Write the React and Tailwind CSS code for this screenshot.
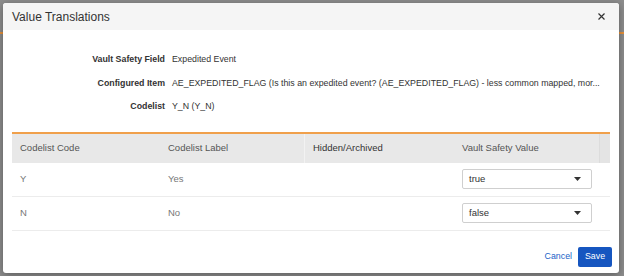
import React from 'react';

const fields = [
  { label: 'Vault Safety Field', value: 'Expedited Event' },
  {
    label: 'Configured Item',
    value:
      'AE_EXPEDITED_FLAG (Is this an expedited event? (AE_EXPEDITED_FLAG) - less common mapped, mor...',
  },
  { label: 'Codelist', value: 'Y_N (Y_N)' },
];

const rows = [
  { code: 'Y', label: 'Yes', value: 'true' },
  { code: 'N', label: 'No', value: 'false' },
];

const cols = 'grid grid-cols-[148px_145px_149px_146px_1fr]';

const Caret = () => (
  <svg width="7" height="4" viewBox="0 0 7 4" className="text-[#333]">
    <path d="M0 0 L7 0 L3.5 4 Z" fill="currentColor" />
  </svg>
);

const ValueSelect = ({ value }) => (
  <div className="w-[130px] h-[20px] border border-[#cfcfcf] rounded-[2px] bg-white flex items-center justify-between pl-[6px] pr-[10px] text-[9.5px] text-[#333]">
    <span>{value}</span>
    <Caret />
  </div>
);

export default function App() {
  return (
    <div
      className="w-[624px] h-[276px] bg-[#8d8d8d] overflow-hidden relative pt-[3px] pl-[3px]"
      style={{ fontFamily: '"Liberation Sans", Arial, sans-serif' }}
    >
      {/* background page hints */}
      <div className="absolute left-0 top-[32px] w-[3px] h-[2px] bg-[#e8923a]" />
      <div className="absolute right-0 top-[32px] w-[5px] h-[2px] bg-[#e8923a]" />

      <div className="relative w-[616px] h-[270px] bg-white rounded-[3px] shadow-[0_2px_8px_rgba(0,0,0,0.35)] flex flex-col">
        {/* Header */}
        <div className="h-[27px] bg-[#f5f5f5] rounded-t-[3px] flex items-center justify-between pl-[9px] pr-[14px]">
          <span className="text-[12px] text-[#333]">Value Translations</span>
          <svg width="7" height="7" viewBox="0 0 7 7" className="text-[#333]">
            <path d="M0.5 0.5 L6.5 6.5 M6.5 0.5 L0.5 6.5" stroke="currentColor" strokeWidth="1.2" />
          </svg>
        </div>

        {/* Details */}
        <div className="pt-[18px] flex flex-col">
          {fields.map((f) => (
            <div key={f.label} className="h-[23.5px] flex items-center text-[8.8px] text-[#333]">
              <span className="w-[162px] text-right font-bold">{f.label}</span>
              <span className="ml-[7px] whitespace-nowrap">{f.value}</span>
            </div>
          ))}
        </div>

        {/* Table */}
        <div className="mt-[13px] mx-[9px] border-t-2 border-[#f0a04b] text-[9.5px]">
          <div className={`${cols} h-[29px] bg-[#e8e8e8] text-[#555]`}>
            <div className="px-2 flex items-center">Codelist Code</div>
            <div className="px-2 flex items-center border-r border-[#f2f2f2]">Codelist Label</div>
            <div className="px-2 flex items-center text-[#333]">Hidden/Archived</div>
            <div className="px-2 flex items-center border-r border-[#dcdcdc]">Vault Safety Value</div>
            <div className="bg-[#e4e4e4]" />
          </div>
          {rows.map((r) => (
            <div key={r.code} className={`${cols} h-[34px] border-b border-[#ececec] text-[#777]`}>
              <div className="px-2 flex items-center">{r.code}</div>
              <div className="px-2 flex items-center">{r.label}</div>
              <div className="px-2 flex items-center" />
              <div className="px-2 flex items-center">
                <ValueSelect value={r.value} />
              </div>
              <div />
            </div>
          ))}
        </div>

        {/* Footer */}
        <div className="mt-[16px] flex items-center justify-end pr-[7px] gap-[6px]">
          <button className="text-[8.8px] text-[#1a62c7]">Cancel</button>
          <button className="h-[20px] w-[34px] rounded-[2px] bg-[#1656c0] text-white text-[8.8px]">
            Save
          </button>
        </div>
      </div>
    </div>
  );
}
